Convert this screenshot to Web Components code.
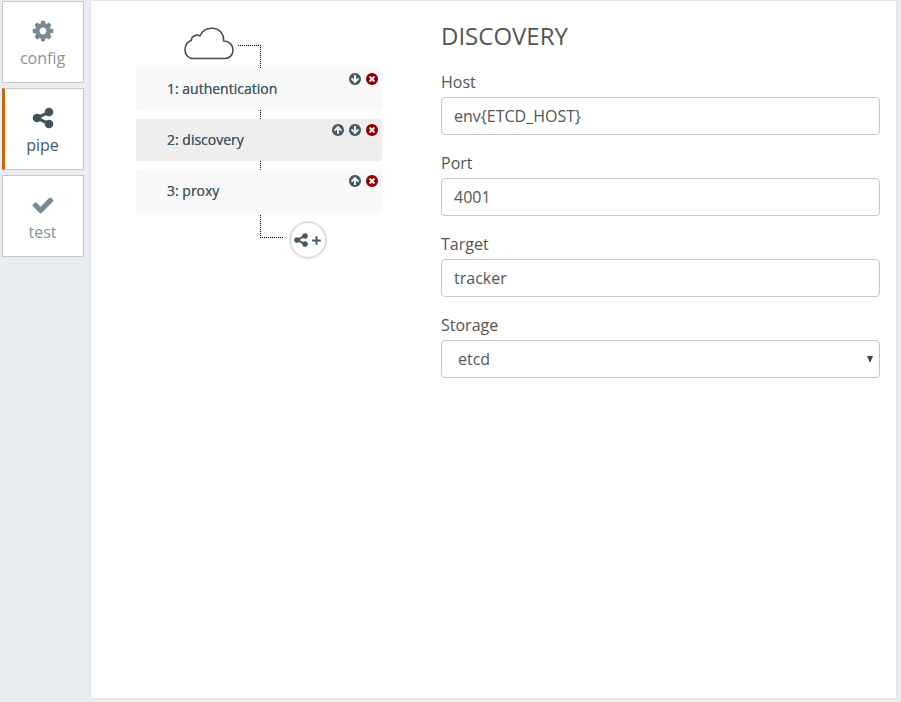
<!DOCTYPE html>
<html lang="en">
<head>
<meta charset="utf-8">
<meta name="viewport" content="width=device-width, initial-scale=1">
<title>Pipe editor</title>
<style>
  body { margin: 0; background: #e9edf2; color: #555; font: 16px/24px "Open Sans", sans-serif; }
</style>
</head>
<body>
<pipe-app></pipe-app>

<script>
const disc = 'M1664 896q0 209-103 385.5t-279.5 279.5-385.5 103-385.5-103-279.5-279.5-103-385.5 103-385.5 279.5-279.5 385.5-103 385.5 103 279.5 279.5 103 385.5z';
const arrow = 'M1413 896q0-27-18-45l-91-91q-18-18-45-18t-45 18l-189 189v-502q0-26-19-45t-45-19h-128q-26 0-45 19t-19 45v502l-189-189q-19-19-45-19t-45 19l-91 91q-18 18-18 45t18 45l362 362 91 91q18 18 45 18t45-18l91-91 362-362q18-18 18-45z';
const ICONS = {
  cog: 'M1152 896q0-106-75-181t-181-75-181 75-75 181 75 181 181 75 181-75 75-181zm512-109v222q0 12-8 23t-20 13l-185 28q-19 54-39 91 35 50 107 138 10 12 10 25t-9 23q-27 37-99 108t-94 71q-12 0-26-9l-138-108q-44 23-91 38-16 136-29 186-7 28-36 28h-222q-14 0-24.5-8.5t-11.5-21.5l-28-184q-49-16-90-37l-141 107q-10 9-25 9-14 0-25-11-126-114-165-168-7-10-7-23 0-12 8-23 15-21 51-66.5t54-70.5q-27-50-41-99l-183-27q-13-2-21-12.5t-8-23.5v-222q0-12 8-23t19-13l186-28q14-46 39-92-40-57-107-138-10-12-10-24 0-10 9-23 26-36 98.5-107.5t94.5-71.5q13 0 26 10l138 107q44-23 91-38 16-136 29-186 7-28 36-28h222q14 0 24.5 8.5t11.5 21.5l28 184q49 16 90 37l142-107q9-9 24-9 13 0 25 10 129 119 165 170 7 8 7 22 0 12-8 23-15 21-51 66.5t-54 70.5q26 50 41 98l183 28q13 2 21 12.5t8 23.5z',
  share: 'M1344 1024q133 0 226.5 93.5t93.5 226.5-93.5 226.5-226.5 93.5-226.5-93.5-93.5-226.5q0-12 2-34l-360-180q-92 86-218 86-133 0-226.5-93.5t-93.5-226.5 93.5-226.5 226.5-93.5q126 0 218 86l360-180q-2-22-2-34 0-133 93.5-226.5t226.5-93.5 226.5 93.5 93.5 226.5-93.5 226.5-226.5 93.5q-126 0-218-86l-360 180q2 22 2 34t-2 34l360 180q92-86 218-86z',
  check: 'M1671 566q0 40-28 68l-724 724-136 136q-28 28-68 28t-68-28l-136-136-362-362q-28-28-28-68t28-68l136-136q28-28 68-28t68 28l294 295 656-657q28-28 68-28t68 28l136 136q28 28 28 68z',
  plus: 'M1600 736v320h-544v544H736v-544H192V736h544V192h320v544z',
  down: arrow + disc,
  up: arrow + disc,
  remove: 'M1277 1122q0-26-19-45l-181-181 181-181q19-19 19-45 0-27-19-46l-90-90q-19-19-46-19-26 0-45 19l-181 181-181-181q-19-19-45-19-27 0-46 19l-90 90q-19 19-19 46 0 26 19 45l181 181-181 181q-19 19-19 45 0 27 19 46l90 90q19 19 46 19 26 0 45-19l181-181 181 181q19 19 45 19 27 0 46-19l90-90q19-19 19-46z' + disc
};

class BaseElement extends HTMLElement {
  render(html) {
    const t = document.createElement('template');
    t.innerHTML = html;
    this.attachShadow({ mode: 'open' }).append(t.content.cloneNode(true));
  }
}

customElements.define('ui-icon', class extends BaseElement {
  connectedCallback() {
    if (this.shadowRoot) return;
    const name = this.getAttribute('name');
    this.render(`
      <style>
        :host { display: block; width: 14px; height: 14px; }
        svg { display: block; width: 100%; height: 100%; }
      </style>
      <svg viewBox="0 0 1792 1792" aria-hidden="true"><path fill="currentColor" fill-rule="evenodd" d="${ICONS[name]}" ${name === 'up' ? 'transform="rotate(180 896 896)"' : ''}/></svg>`);
  }
});

customElements.define('nav-tile', class extends BaseElement {
  connectedCallback() {
    if (this.shadowRoot) return;
    this.render(`
      <style>
        :host { display: block; color: #87959a; }
        :host([active]) { color: #455a64; }
        button { box-sizing: border-box; width: 82px; height: 82px; padding: 4px 1px 0 0; display: flex; flex-direction: column; align-items: center; justify-content: center; gap: 3px;
          border: 1px solid #c8c8c8; background: #fff; color: inherit; font: inherit; cursor: pointer; }
        :host([active]) button { border-left: 3px solid #c9650f; padding-right: 3px; }
        ui-icon { width: 24px; height: 24px; color: #788b95; }
        :host([active]) ui-icon { color: #3d525c; }
      </style>
      <button type="button"><ui-icon name="${this.getAttribute('icon')}"></ui-icon><span><slot></slot></span></button>`);
  }
});

customElements.define('pipe-step', class extends BaseElement {
  connectedCallback() {
    if (this.shadowRoot) return;
    const actions = this.getAttribute('actions').split(' ').map(a =>
      `<button type="button" class="${a}" aria-label="${a}"><ui-icon name="${a}"></ui-icon></button>`).join('');
    this.render(`
      <style>
        :host { display: flex; align-items: center; height: 42px; background: #f9f9f9; border-radius: 2px; box-shadow: 0 0 2px #eee; color: #455a64; }
        :host([selected]) { background: #eee; }
        .name { flex: 1; padding-left: 31px; font-size: 14px; line-height: 20px; text-shadow: 0 0 0 currentColor; }
        .actions { display: flex; gap: 3px; align-self: flex-start; padding: 4px 3px; }
        button { display: block; padding: 0; border: 0; background: none; color: inherit; cursor: pointer; }
        .remove { color: #900005; }
      </style>
      <span class="name"><slot></slot></span>
      <span class="actions">${actions}</span>`);
  }
});

customElements.define('pipe-line', class extends BaseElement {
  constructor() {
    super();
    this.render(`
      <style>
        :host { display: block; }
        .start { display: flex; padding-left: 48px; gap: 4px; }
        .start svg { display: block; width: 50px; height: 33px; }
        .start i { width: 22px; height: 22px; margin-top: 18px; border: 1px dotted #000; border-width: 1px 1px 0 0; }
        .end { display: flex; padding: 3px 0 0 124px; gap: 6px; }
        .end i { width: 22px; height: 22px; border: 1px dotted #000; border-width: 0 0 1px 1px; }
        .end button { box-sizing: border-box; width: 38px; height: 38px; margin-top: 6px; padding: 0 2px 0 0; display: flex; align-items: center; justify-content: center; gap: 2px;
          border: 2px solid #ddd; border-radius: 50%; background: #fff; color: #455a64; cursor: pointer; }
        .end ui-icon:first-child { width: 16px; height: 16px; }
        .end ui-icon:last-child { width: 11px; height: 11px; }
      </style>
      <div class="start">
        <svg viewBox="0 0 50 33" fill="none" stroke="#474c5b" stroke-width="1.6" stroke-linejoin="round" aria-hidden="true">
          <path d="M9 31.5C4.500 31.500 1 27.800 1 23C1 18 3.500 14.600 7.200 13.400C7.300 9.500 11.800 7 16 8.800C18 4 22.500 1.200 28 1.200C35 1.200 40 6.500 39.600 14C45 14 49 17.800 49 23C49 28 45.500 31.500 41 31.500Z"/>
        </svg>
        <i></i>
      </div>
      <slot></slot>
      <div class="end"><i></i><button type="button" aria-label="add step"><ui-icon name="share"></ui-icon><ui-icon name="plus"></ui-icon></button></div>`);
  }
});

customElements.define('pipe-link', class extends BaseElement {
  constructor() {
    super();
    this.render(`
      <style>
        :host { display: block; padding-left: 124px; }
        i { display: block; height: 9px; border-left: 1px dotted #000; }
      </style>
      <i></i>`);
  }
});

customElements.define('form-field', class extends BaseElement {
  connectedCallback() {
    if (this.shadowRoot) return;
    const value = this.getAttribute('value');
    const control = this.hasAttribute('choice')
      ? `<select id="control"><option>${value}</option></select><svg viewBox="0 0 6 6" aria-hidden="true"><path fill="#444" d="M0 0h6L3.500 6h-1z"/></svg>`
      : `<input id="control" type="text" value="${value}">`;
    this.render(`
      <style>
        :host { display: block; }
        label { display: block; margin-bottom: 3px; }
        .box { display: grid; align-items: center; }
        .box > * { grid-area: 1 / 1; }
        input, select { box-sizing: border-box; width: 100%; min-width: 0; height: 38px; margin: 0; padding: 0 12px; border: 1px solid #c4c6c7; border-radius: 4px;
          background: #fff; color: #555; font: inherit; appearance: none; outline: 0; }
        select { padding: 0 16px; }
        svg { width: 6px; height: 6px; justify-self: end; margin-right: 7px; pointer-events: none; }
      </style>
      <label for="control"><slot></slot></label>
      <div class="box">${control}</div>`);
  }
});

customElements.define('pipe-app', class extends BaseElement {
  constructor() {
    super();
    this.render(`
      <style>
        :host { box-sizing: border-box; display: flex; gap: 7px; min-height: 100vh; padding: 1px 5px 4px 2px; }
        nav { display: flex; flex-direction: column; gap: 5px; }
        main { flex: 1; display: grid; grid-template-columns: 246px minmax(0, 1fr); column-gap: 59px; align-items: start; padding: 0 16px 0 45px; background: #fff; box-shadow: 0 0 2px #ccd0d6; }
        pipe-line { margin-top: 26px; }
        h1 { margin: 19px 0 18px; font-size: 24px; line-height: 32px; font-weight: 400; }
        form { display: grid; gap: 16px; }
      </style>
      <nav aria-label="Sections">
        <nav-tile icon="cog">config</nav-tile>
        <nav-tile icon="share" active>pipe</nav-tile>
        <nav-tile icon="check">test</nav-tile>
      </nav>
      <main>
        <pipe-line>
          <pipe-step actions="down remove">1: authentication</pipe-step>
          <pipe-link></pipe-link>
          <pipe-step actions="up down remove" selected>2: discovery</pipe-step>
          <pipe-link></pipe-link>
          <pipe-step actions="up remove">3: proxy</pipe-step>
        </pipe-line>
        <section>
          <h1>DISCOVERY</h1>
          <form>
            <form-field value="env{ETCD_HOST}">Host</form-field>
            <form-field value="4001">Port</form-field>
            <form-field value="tracker">Target</form-field>
            <form-field value="etcd" choice>Storage</form-field>
          </form>
        </section>
      </main>`);
  }
});
</script>
</body>
</html>
